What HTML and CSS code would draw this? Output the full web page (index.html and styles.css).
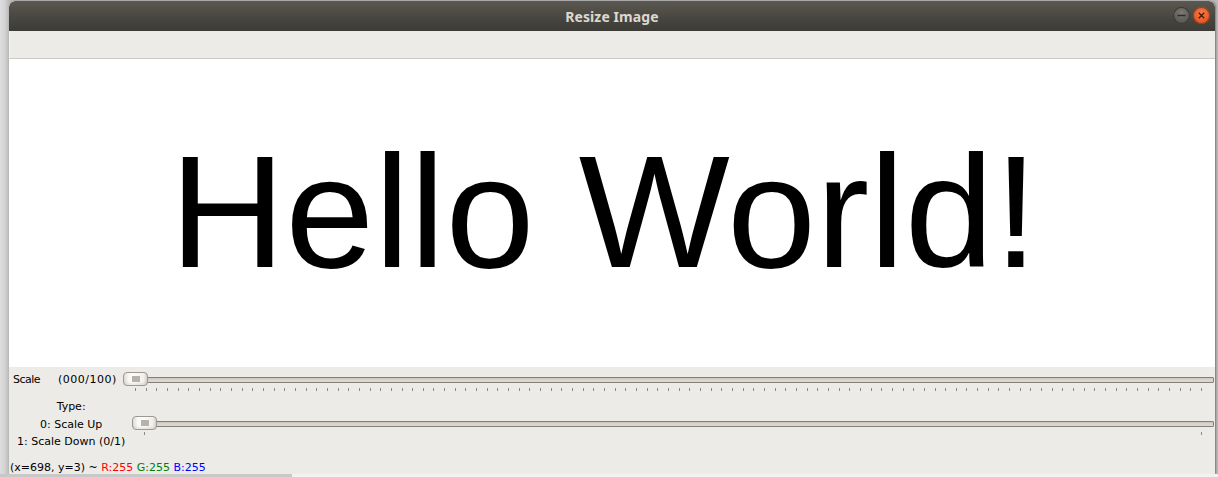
FILE: index.html
```html
<!DOCTYPE html>
<html>
<head>
<meta charset="utf-8">
<title>Resize Image</title>
<link rel="stylesheet" href="styles.css">
</head>
<body>
<div class="desk">
  <div class="window">
    <div class="titlebar">
      <span class="title">Resize Image</span>
      <div class="wbtns">
        <span class="wbtn min"><svg width="17" height="17" viewBox="0 0 17 17"><path d="M4.5 8.5h8" stroke="#2f2e2b" stroke-width="1.4"/></svg></span>
        <span class="wbtn close"><svg width="17" height="17" viewBox="0 0 17 17"><path d="M5.8 5.8l5.4 5.4M11.2 5.8l-5.4 5.4" stroke="#4a1a08" stroke-width="1.4"/></svg></span>
      </div>
    </div>
    <div class="toolbar"></div>
    <div class="canvas">
      <div class="hello">Hello World!</div>
    </div>
    <div class="controls">
      <div class="row1">
        <span class="lbl scale-lbl">Scale</span>
        <span class="lbl val-lbl">(000/100)</span>
        <div class="slider s1">
          <div class="groove"></div>
          <div class="ticks many"></div>
          <div class="handle"></div>
        </div>
      </div>
      <div class="row2">
        <div class="lbl typecol">Type:<br>0: Scale Up<br>1: Scale Down (0/1)</div>
        <div class="slider s2">
          <div class="groove"></div>
          <div class="ticks ends"></div>
          <div class="handle"></div>
        </div>
      </div>
      <div class="status">(x=698, y=3) ~ <span class="r">R:255</span> <span class="g">G:255</span> <span class="b">B:255</span></div>
    </div>
  </div>
  <div class="below"></div>
</div>
</body>
</html>
```

FILE: styles.css
```css
html, body {
  margin: 0;
  padding: 0;
}
body {
  width: 1218px;
  height: 477px;
  overflow: hidden;
  background: linear-gradient(to right, #dedede 0, #d2d2d2 5px, #b9b9b9 9px);
  font-family: "DejaVu Sans", sans-serif;
}
.desk {
  padding: 1px 0 0 9px;
}
.window {
  width: 1206px;
  height: 473px;
  display: flex;
  flex-direction: column;
  background: #edebe7;
  border-radius: 6px 6px 0 0;
  overflow: hidden;
  box-shadow: 1px 0 2px rgba(0,0,0,0.35);
}
.titlebar {
  height: 30px;
  flex: none;
  display: flex;
  align-items: center;
  justify-content: center;
  position: relative;
  background: linear-gradient(#5b5851, #47453f 60%, #3d3b36);
  border-radius: 6px 6px 0 0;
}
.title {
  font-family: "Noto Sans", "DejaVu Sans", sans-serif;
  font-weight: bold;
  font-size: 14px;
  color: #dcd8cf;
  letter-spacing: 0.1px;
}
.wbtns {
  position: absolute;
  right: 5px;
  top: 6px;
  display: flex;
  gap: 3px;
}
.wbtn {
  width: 17px;
  height: 17px;
  border-radius: 50%;
  display: block;
}
.wbtn svg {
  display: block;
}
.min {
  background: radial-gradient(circle at 50% 35%, #7c7a75, #595753 70%, #474542);
  box-shadow: inset 0 0 0 1px #383734;
}
.close {
  background: radial-gradient(circle at 50% 35%, #f47a4c, #e85a26 65%, #c8461a);
  box-shadow: inset 0 0 0 1px #9a3b16;
}
.toolbar {
  height: 27px;
  flex: none;
  background: #edebe7;
  border-bottom: 1px solid #ccc8c2;
  border-left: 1px solid #f7f6f4;
}
.canvas {
  height: 308px;
  flex: none;
  background: #ffffff;
  box-sizing: border-box;
  padding: 73px 16px 0 0;
  text-align: center;
}
.hello {
  font-family: "Liberation Sans", Arial, sans-serif;
  font-size: 160px;
  line-height: 160px;
  color: #000;
  white-space: nowrap;
}
.controls {
  flex: 1;
  background: #edebe7;
  overflow: hidden;
}
.lbl {
  font-size: 11px;
  line-height: 14px;
  color: #000;
}
.row1 {
  display: flex;
  align-items: flex-start;
  padding-top: 6px;
  height: 19px;
}
.scale-lbl {
  margin-left: 4px;
  width: 45px;
  letter-spacing: -0.5px;
}
.val-lbl {
  width: 65px;
  letter-spacing: 0.5px;
}
.slider {
  position: relative;
  height: 19px;
  flex: 1;
  margin-right: 1px;
}
.groove {
  margin-top: 4px;
  height: 6px;
  box-sizing: border-box;
  border: 1px solid #857f78;
  background: linear-gradient(#c9c3bb, #d9d3cb 40%, #ddd8d1);
  border-radius: 1px;
}
.ticks {
  margin: 5px 12px 0 12px;
  height: 3px;
}
.many {
  background: repeating-linear-gradient(to right, #8e8982 0, #8e8982 1px, transparent 1px, transparent 10.66px);
}
.ends {
  box-sizing: border-box;
  border-left: 1px solid #8e8982;
  border-right: 1px solid #8e8982;
}
.handle {
  position: absolute;
  left: 0;
  top: -1px;
  width: 25px;
  height: 14px;
  box-sizing: border-box;
  border: 1px solid #9c9893;
  border-radius: 4px;
  background: linear-gradient(to right, #e2dfda 0, #eeece9 3px, #f6f5f3 4px, #fdfdfc 40%, #f1efec 85%, #d8d4ce);
  box-shadow: inset 0 -2px 2px rgba(0,0,0,0.07);
}
.handle::after {
  content: "";
  position: absolute;
  left: 8px;
  top: 3px;
  width: 8px;
  height: 6px;
  background: radial-gradient(circle, #b5b0a9 0.7px, transparent 1px) 0 0 / 2px 2px;
}
.row2 {
  display: flex;
  align-items: flex-start;
  margin-top: 5px;
  height: 54px;
}
.typecol {
  margin-left: 8px;
  line-height: 17.5px;
  text-align: center;
  padding-top: 1px;
}
.s2 {
  margin-left: 7px;
  margin-top: 20px;
}
.status {
  margin-top: 10px;
  margin-left: 1px;
  font-size: 11px;
  line-height: 13px;
  color: #000;
  white-space: nowrap;
}
.r { color: #ff0000; }
.g { color: #008000; }
.b { color: #0000ff; }
.below {
  height: 3px;
  margin-left: -9px;
  background: linear-gradient(to right, #c8c8c8 292px, #f2f2f2 292px);
}
```
